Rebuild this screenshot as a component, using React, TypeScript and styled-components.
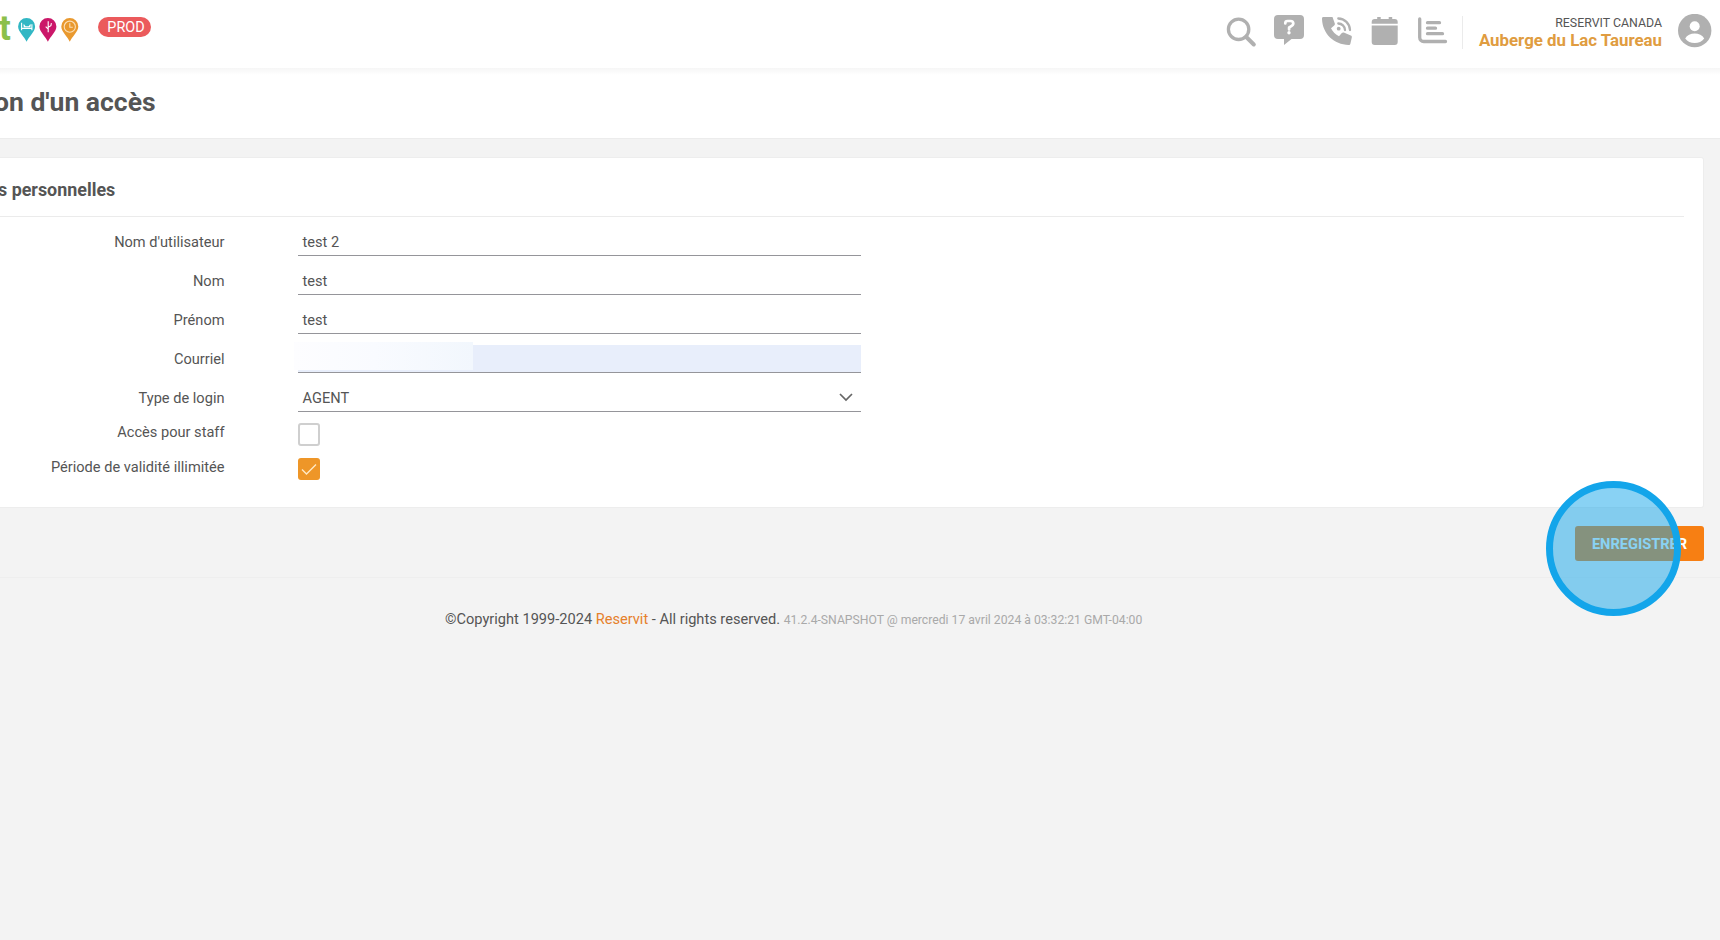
import React from "react";
import styled, { createGlobalStyle } from "styled-components";

const GlobalStyle = createGlobalStyle`
  * { box-sizing: border-box; }
  body {
    margin: 0;
    background: #f3f3f3;
    color: #555;
    font-family: Roboto, "Liberation Sans", sans-serif;
    font-size: 14.6px;
    overflow: hidden;
  }
`;

const Page = styled.div`
  position: relative;
  width: 1720px;
  height: 940px;
  overflow: hidden;
  background: #f3f3f3;
`;

const Header = styled.header`
  display: flex;
  justify-content: space-between;
  height: 68px;
  background: #fff;
`;

const Brand = styled.div`
  display: flex;
  align-items: flex-start;
`;

const Wordmark = styled.span`
  width: 13px;
  height: 44px;
  margin-left: -1px;
  font: 700 35px/58px Roboto, sans-serif;
  color: #8cc04b;
`;

const Pins = styled.svg`
  margin: 15px 0 0 5px;
`;

const EnvBadge = styled.span`
  margin: 17px 0 0 18px;
  width: 53px;
  height: 20px;
  border-radius: 10px;
  background: #eb5a5c;
  color: #fff;
  font-size: 14.4px;
  line-height: 21px;
  text-align: center;
  padding-left: 3px;
`;

const Tools = styled.div`
  display: flex;
  align-items: flex-start;
`;

const IconRow = styled.nav`
  display: flex;
  gap: 16px;
  padding: 14px 12px 0 0;
`;

const ToolIcon = styled.svg`
  width: 32px;
  height: 34px;
  color: #b0b0b0;
`;

const Account = styled.div`
  width: 200px;
  height: 33px;
  margin-top: 16px;
  border-left: 1px solid #ebebeb;
  text-align: right;
`;

const Company = styled.div`
  font-size: 12.35px;
  line-height: 14px;
`;

const Hotel = styled.div`
  font-size: 16.85px;
  line-height: 20px;
  font-weight: 700;
  color: #e09c40;
`;

const Avatar = styled.svg`
  margin: 14px 8px 0 16px;
`;

const TitleBar = styled.div`
  height: 71px;
  background: linear-gradient(#f6f6f6, #fcfcfc 5px, #fff 7px);
  border-bottom: 1px solid #ececec;
`;

const Title = styled.h1`
  margin: 0 0 0 -6px;
  font-size: 26.5px;
  line-height: 67px;
  font-weight: 700;
`;

const Card = styled.section`
  width: 1704px;
  height: 351px;
  margin-top: 18px;
  background: #fff;
  border: 1px solid #ededed;
  border-left: 0;
  border-radius: 0 3px 3px 0;
`;

const CardTitle = styled.h2`
  width: 1684px;
  height: 59px;
  margin: 0;
  padding-top: 2px;
  text-indent: -2px;
  font-size: 17.9px;
  line-height: 60px;
  font-weight: 700;
  border-bottom: 1px solid #ebebeb;
`;

const Form = styled.div`
  display: grid;
  grid-template-columns: 224.5px 563px;
  column-gap: 73.5px;
`;

const Label = styled.label<{ $compact?: boolean }>`
  height: ${(p) => (p.$compact ? 35 : 39)}px;
  line-height: ${(p) => (p.$compact ? 41 : 51)}px;
  text-align: right;
  white-space: nowrap;
`;

const Field = styled.div<{ $filled?: boolean }>`
  position: relative;
  display: flex;
  align-items: center;
  justify-content: space-between;
  height: 28px;
  margin-top: 11px;
  padding: 1px 8px 0 4.5px;
  border-bottom: 1px solid #95959a;
  background: ${(p) => (p.$filled ? "#e8eefb" : "transparent")};
`;

const Chevron = styled.svg`
  margin-top: -2px;
`;

const Mask = styled.div`
  position: absolute;
  left: -4px;
  top: -3px;
  width: 179px;
  height: 28px;
  background: linear-gradient(90deg, #fdfdff, #f9fbff 45%, #f2f7fd);
`;

const Check = styled.div<{ $on?: boolean }>`
  width: 22px;
  height: ${(p) => (p.$on ? 22 : 23)}px;
  margin-top: 11px;
  border: ${(p) => (p.$on ? "0" : "2px solid #cfcfcf")};
  border-radius: 3px;
  background: ${(p) => (p.$on ? "#ee9628" : "#fff")};
`;

const Actions = styled.div`
  display: flex;
  justify-content: flex-end;
  height: 70px;
  padding: 18px 16px 0 0;
  border-bottom: 1px solid #eeeeee;
`;

const SaveButton = styled.button`
  width: 129px;
  height: 35px;
  border: 0;
  padding: 0;
  border-radius: 3px;
  background: #f77f13;
  color: #fff;
  font: 700 14.6px/36px Roboto, sans-serif;
`;

const ClickHalo = styled.div`
  position: absolute;
  left: 1546px;
  top: 481px;
  width: 135px;
  height: 135px;
  border: 7px solid #13a5ea;
  border-radius: 50%;
  background: rgba(19, 165, 234, 0.5);
`;

const Footer = styled.footer`
  padding: 30px 0 0 445px;
  line-height: 22px;
  white-space: nowrap;
`;

const Link = styled.a`
  color: #e6802b;
`;

const Version = styled.small`
  font-size: 12.2px;
  color: #a9a9a9;
`;

const pinPath = "M9 24C7 19 .5 14 .5 8.7a8.5 8.5 0 0 1 17 0C17.500 14 11 19 9 24Z";

export default function App() {
  return (
    <Page>
      <GlobalStyle />
      <Header>
        <Brand>
          <Wordmark>t</Wordmark>
          <Pins width="63" height="28" viewBox="0 0 63 28" fill="none">
            <g transform="translate(.6 2.700)">
              <path d={pinPath} fill="#31b7c4" />
              <path d="M4 5v7.500M14.300 6.500v6M4 10.700h10.300M6 9h7M6 7l1.500 2M13 7l-1.500 2" stroke="#fff" strokeWidth="1.100" />
            </g>
            <g transform="translate(21.900 2.700)">
              <path d={pinPath} fill="#cb1769" />
              <path d="M9.300 3.500v11M6.800 9l2.500 2.500M12.500 5.500l-.5 2.500-2.700 1.500" stroke="#fff" strokeWidth="1.100" />
            </g>
            <g transform="translate(43.800 2.700)">
              <path d={pinPath} fill="#e9992f" />
              <circle cx="9" cy="9" r="5.600" stroke="#fbe0b8" strokeWidth="1.100" />
              <path d="M9 5.500V9.500h3" stroke="#fbe0b8" strokeWidth="1.100" />
            </g>
          </Pins>
          <EnvBadge>PROD</EnvBadge>
        </Brand>
        <Tools>
          <IconRow>
            <ToolIcon viewBox="0 0 32 34" fill="none" stroke="currentColor">
              <circle cx="12.600" cy="15.300" r="10.200" strokeWidth="3.300" />
              <path d="M20.300 23l7.500 7.500" strokeWidth="4" strokeLinecap="round" />
            </ToolIcon>
            <ToolIcon viewBox="0 0 32 34" fill="none">
              <path d="M4 1h22a4 4 0 0 1 4 4v16a4 4 0 0 1-4 4h-8.500L10 31v-6H4a4 4 0 0 1-4-4V5a4 4 0 0 1 4-4Z" fill="currentColor" />
              <path d="M11.300 9.500V9c0-1.300 1-2 2.200-2h3c1.700 0 2.800 1 2.800 2.600 0 2-1.500 2.500-4.200 3.900v2" stroke="#fff" strokeWidth="2.700" strokeLinecap="round" strokeLinejoin="round" />
              <circle cx="15" cy="18.800" r="1.700" fill="#fff" />
            </ToolIcon>
            <ToolIcon viewBox="0 0 32 34" fill="none">
              <path d="M1 3h9.500l2.300 6.500c.3.800 0 1.500-.6 2L9 14.300c1.800 3.600 4.500 6.300 8 8l2.800-3.200c.6-.7 1.300-.8 2-.5l7 2.900c.9.400 1.200 1.100 1 2l-1.400 6.200c-.2.900-.8 1.300-1.700 1.300C12 30.500 .6 20 0 5c0-1 .2-1.700 1-2Z" fill="currentColor" />
              <path d="M16.300 4.500A12 12 0 0 1 28 16M16.300 9.500a6.800 6.800 0 0 1 6.700 6.500" stroke="currentColor" strokeWidth="2.300" strokeLinecap="round" />
              <circle cx="16.700" cy="14.700" r="1.900" fill="currentColor" />
            </ToolIcon>
            <ToolIcon viewBox="0 0 32 34" fill="currentColor">
              <path d="M1.700 9.800V8a3 3 0 0 1 3-3h2.500V3h3.500v2h8V3h3.500v2h2.500a3 3 0 0 1 3 3v1.800ZM1.700 11.500h26V28a3 3 0 0 1-3 3h-20a3 3 0 0 1-3-3Z" />
            </ToolIcon>
            <ToolIcon viewBox="0 0 32 34" fill="none" stroke="currentColor" strokeWidth="3.300" strokeLinecap="round">
              <path d="M1.700 5v18.500a4 4 0 0 0 4 4H27.500" />
              <path d="M9.500 8.700h12M9.500 14.200h8M9.500 19.700h15" />
            </ToolIcon>
          </IconRow>
          <Account>
            <Company>RESERVIT CANADA</Company>
            <Hotel>Auberge du Lac Taureau</Hotel>
          </Account>
          <Avatar width="34" height="34" viewBox="0 0 34 34">
            <circle cx="16.700" cy="16.500" r="16.700" fill="#b0b0b0" />
            <circle cx="16.700" cy="12.300" r="5" fill="#fff" />
            <path d="M7.200 24.500c1.700-3.400 5.500-5 9.500-5s7.800 1.600 9.500 5c-2.200 3-5.600 4.600-9.500 4.600s-7.300-1.600-9.500-4.600Z" fill="#fff" />
          </Avatar>
        </Tools>
      </Header>
      <TitleBar>
        <Title>on d'un accès</Title>
      </TitleBar>
      <Card>
        <CardTitle>s personnelles</CardTitle>
        <Form>
          <Label>Nom d'utilisateur</Label>
          <Field>test 2</Field>
          <Label>Nom</Label>
          <Field>test</Field>
          <Label>Prénom</Label>
          <Field>test</Field>
          <Label>Courriel</Label>
          <Field $filled>
            <Mask />
          </Field>
          <Label>Type de login</Label>
          <Field>
            AGENT
            <Chevron width="14" height="9" viewBox="0 0 14 9" fill="none" stroke="#666" strokeWidth="1.700">
              <path d="M1 1l6 6 6-6" />
            </Chevron>
          </Field>
          <Label $compact>Accès pour staff</Label>
          <Check />
          <Label $compact>Période de validité illimitée</Label>
          <Check $on>
            <svg width="22" height="22" viewBox="0 0 22 22" fill="none" stroke="#ffe9c4" strokeWidth="1.400">
              <path d="M4 11.500l4.500 4.500L18 6.500" />
            </svg>
          </Check>
        </Form>
      </Card>
      <Actions>
        <SaveButton>ENREGISTRER</SaveButton>
      </Actions>
      <Footer>
        ©Copyright 1999-2024 <Link>Reservit</Link> - All rights reserved.{" "}
        <Version>41.2.4-SNAPSHOT @ mercredi 17 avril 2024 à 03:32:21 GMT-04:00</Version>
      </Footer>
      <ClickHalo />
    </Page>
  );
}
